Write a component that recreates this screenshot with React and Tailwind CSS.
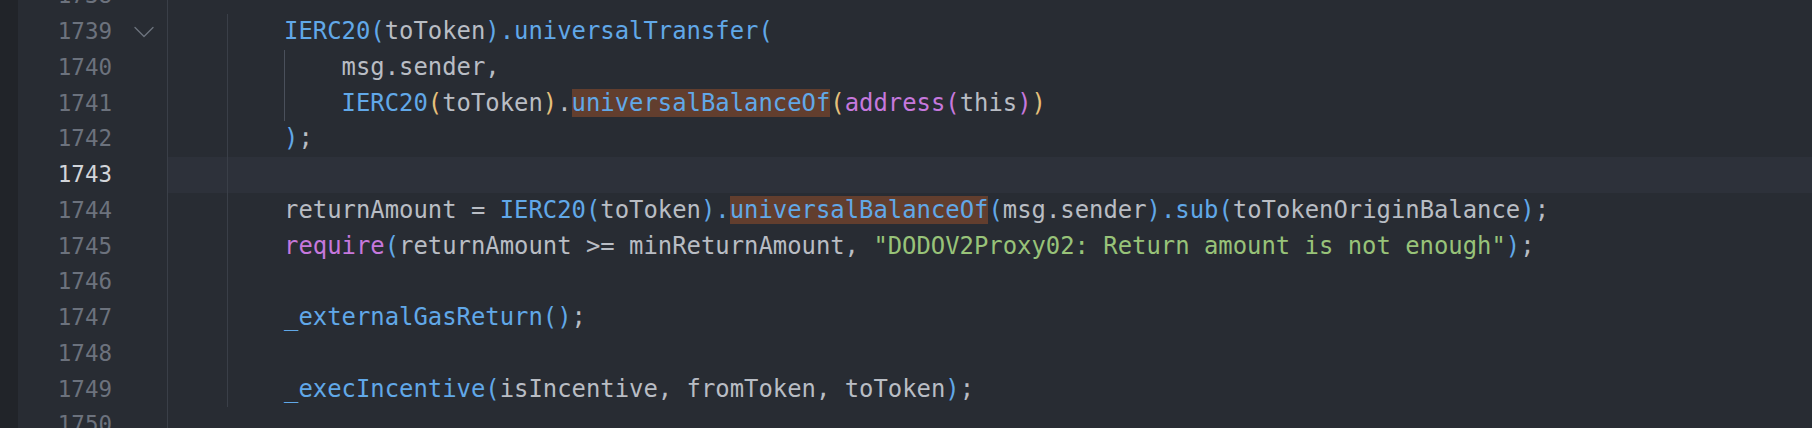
import { ChevronDown } from "lucide-react";

const C = {
  fn: "text-[#61a8e8]",
  kw: "text-[#c678dd]",
  txt: "text-[#b9bdc4]",
  str: "text-[#98c379]",
  y: "text-[#e5c07b]",
};

const T = ({ c, hl, children }) => (
  <span className={`${C[c] || C.txt} ${hl ? "bg-[#623e2e]" : ""}`}>{children}</span>
);

const lines = [
  { n: 1738, depth: 1, code: null },
  {
    n: 1739,
    depth: 2,
    fold: true,
    code: (
      <>
        <T c="fn">IERC20(</T>
        <T>toToken</T>
        <T c="fn">).universalTransfer(</T>
      </>
    ),
  },
  {
    n: 1740,
    depth: 3,
    code: <T>msg.sender,</T>,
  },
  {
    n: 1741,
    depth: 3,
    code: (
      <>
        <T c="fn">IERC20</T>
        <T c="y">(</T>
        <T>toToken</T>
        <T c="y">)</T>
        <T>.</T>
        <T c="fn" hl>
          universalBalanceOf
        </T>
        <T c="y">(</T>
        <T c="kw">address(</T>
        <T>this</T>
        <T c="kw">)</T>
        <T c="y">)</T>
      </>
    ),
  },
  {
    n: 1742,
    depth: 2,
    code: (
      <>
        <T c="fn">)</T>
        <T>;</T>
      </>
    ),
  },
  { n: 1743, depth: 2, active: true, code: null },
  {
    n: 1744,
    depth: 2,
    code: (
      <>
        <T>returnAmount = </T>
        <T c="fn">IERC20(</T>
        <T>toToken</T>
        <T c="fn">).</T>
        <T c="fn" hl>
          universalBalanceOf
        </T>
        <T c="fn">(</T>
        <T>msg.sender</T>
        <T c="fn">).sub(</T>
        <T>toTokenOriginBalance</T>
        <T c="fn">)</T>
        <T>;</T>
      </>
    ),
  },
  {
    n: 1745,
    depth: 2,
    code: (
      <>
        <T c="kw">require</T>
        <T c="fn">(</T>
        <T>returnAmount &gt;= minReturnAmount, </T>
        <T c="str">"DODOV2Proxy02: Return amount is not enough"</T>
        <T c="fn">)</T>
        <T>;</T>
      </>
    ),
  },
  { n: 1746, depth: 2, code: null },
  {
    n: 1747,
    depth: 2,
    code: (
      <>
        <T c="fn">_externalGasReturn()</T>
        <T>;</T>
      </>
    ),
  },
  { n: 1748, depth: 2, code: null },
  {
    n: 1749,
    depth: 2,
    code: (
      <>
        <T c="fn">_execIncentive(</T>
        <T>isIncentive, fromToken, toToken</T>
        <T c="fn">)</T>
        <T>;</T>
      </>
    ),
  },
  { n: 1750, depth: 1, code: null },
];

const Row = ({ line }) => {
  const guides = [];
  for (let i = 0; i < line.depth; i++) {
    let cls = "w-[57.52px] shrink-0";
    if (i === 1) cls += " border-l border-[#3a3f48]";
    if (i === 2) cls += " border-l border-[#4a505b]";
    guides.push(<div key={i} className={cls} />);
  }
  return (
    <div className="flex h-[35.75px]">
      <div className="w-[18px] shrink-0 bg-[#212429]" />
      <div className="w-[149px] shrink-0 flex items-center">
        <div
          className={`w-[94px] text-right text-[22.5px] leading-[35.75px] ${
            line.active ? "text-[#d2d5da]" : "text-[#6c727d]"
          }`}
        >
          {line.n}
        </div>
        <div className="w-[55px] flex items-center">
          {line.fold && (
            <ChevronDown size={36} strokeWidth={0.9} className="text-[#6c727d] ml-[14px]" />
          )}
        </div>
      </div>
      <div
        className={`flex-1 flex border-l border-[#3a3f48] ${
          line.active ? "bg-[#2d313a]" : ""
        }`}
      >
        <div className="w-px shrink-0" />
        {guides}
        <div className="whitespace-pre leading-[35.75px] text-[23.88px]">{line.code}</div>
      </div>
    </div>
  );
};

export default function App() {
  return (
    <div
      className="w-[1812px] h-[428px] overflow-hidden bg-[#282c33]"
      style={{ fontFamily: '"DejaVu Sans Mono", "Liberation Mono", monospace' }}
    >
      <div className="mt-[-21.75px]">
        {lines.map((l) => (
          <Row key={l.n} line={l} />
        ))}
      </div>
    </div>
  );
}
